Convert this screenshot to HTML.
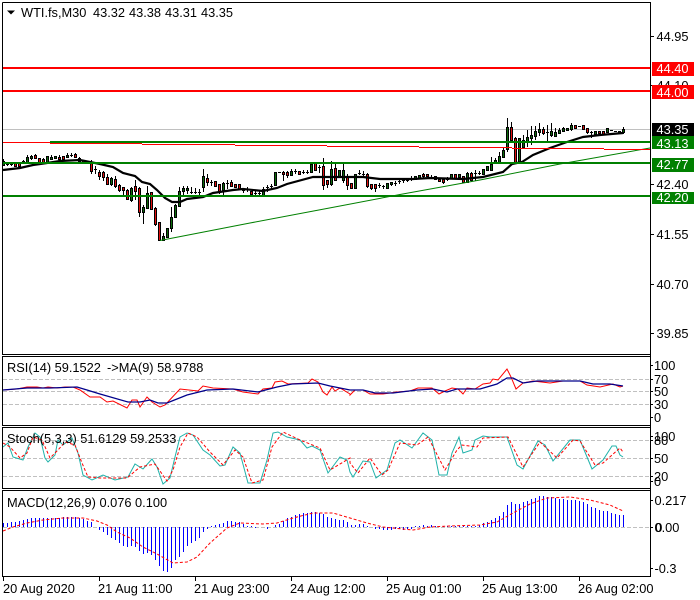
<!DOCTYPE html>
<html><head><meta charset="utf-8"><style>
html,body{margin:0;padding:0;background:#fff;width:700px;height:600px;overflow:hidden}
svg{display:block}
text{font-family:"Liberation Sans",sans-serif;font-size:12.8px;fill:#000}
.w{fill:#fff}
</style></head><body>
<svg width="700" height="600" viewBox="0 0 700 600" xmlns="http://www.w3.org/2000/svg">
<rect width="700" height="600" fill="#fff"/>
<g shape-rendering="crispEdges">
<path fill="none" stroke="#c0c0c0" d="M3 129.500H650"/>
<path fill="none" stroke="#000" d="M3.500 159V166M7.500 162V166M11.500 162V166M23.500 160V163M27.500 155V163M31.500 155V160M35.500 154V159M43.500 158V163M51.500 155V160M59.500 155V160M67.500 153V158M71.500 153V157M75.500 153V158M79.500 157V162M91.500 160V174M95.500 166V174M99.500 170V180M103.500 171V181M107.500 174V185M111.500 177V186M115.500 176V188M119.500 184V192M123.500 187V196M127.500 189V200M131.500 187V202M135.500 180V200M139.500 187V217M143.500 205V224M147.500 186V208M155.500 207V226M159.500 222V241M163.500 233V240M171.500 207V232M175.500 204V217M179.500 187V207M183.500 186V195M187.500 186V194M191.500 187V194M195.500 188V194M199.500 189V195M203.500 169V192M207.500 174V186M211.500 180V186M219.500 184V194M223.500 182V195M227.500 180V189M231.500 180V187M243.500 188V193M247.500 187V192M255.500 191V196M259.500 191V196M263.500 187V197M267.500 185V192M271.500 184V190M283.500 171V181M287.500 171V178M291.500 169V175M295.500 169V174M303.500 170V174M307.500 170V174M319.500 165V173M323.500 158V190M327.500 180V188M331.500 161V186M335.500 164V180M343.500 163V183M347.500 174V190M359.500 170V175M363.500 171V176M367.500 173V188M371.500 184V190M375.500 184V192M379.500 183V188M383.500 185V189M387.500 183V189M391.500 182V186M395.500 181V186M399.500 179V184M403.500 178V183M407.500 178V182M411.500 176V181M423.500 173V178M431.500 175V179M443.500 178V184M447.500 177V181M467.500 172V183M471.500 172V182M475.500 170V181M479.500 171V175M491.500 157V171M495.500 158V163M499.500 152V163M503.500 148V158M507.500 118V152M511.500 122V140M515.500 137V163M523.500 135V148M527.500 130V147M531.500 126V145M535.500 126V140M539.500 123V136M543.500 127V135M547.500 125V141M551.500 123V137M555.500 128V137M559.500 128V134M563.500 127V132M571.500 123V131M587.500 128V134M591.500 131V138M623.500 127V134"/>
<path fill="none" stroke="#000" d="M6 164.500h3M10 164.500h3M22 161.500h3M70 155.500h3M94 169.500h3M190 192.500h3M194 192.500h3M198 192.500h3M210 182.500h3M226 183.500h3M242 190.500h3M246 189.500h3M254 193.500h3M258 193.500h3M266 187.500h3M270 186.500h3M278 172.500h3M294 171.500h3M302 172.500h3M306 172.500h3M318 167.500h3M358 173.500h3M362 174.500h3M378 185.500h3M382 186.500h3M394 183.500h3M398 181.500h3M402 180.500h3M406 180.500h3M410 178.500h3M430 177.500h3M446 179.500h3M474 173.500h3M478 173.500h3M546 132.500h3M578 126.500h3M590 132.500h3M610 130.500h3M614 131.500h3"/>
<path fill="#0b6b0b" stroke="#000" d="M2.500 161.500h2v4h-2zM26.500 157.500h2v5h-2zM30.500 156.500h2v2h-2zM46.500 156.500h2v7h-2zM50.500 157.500h2v2h-2zM54.500 156.500h2v2h-2zM66.500 155.500h2v2h-2zM110.500 178.500h2v6h-2zM130.500 188.500h2v12h-2zM142.500 207.500h2v5h-2zM146.500 193.500h2v15h-2zM162.500 236.500h2v4h-2zM166.500 228.500h2v9h-2zM170.500 217.500h2v11h-2zM174.500 205.500h2v12h-2zM178.500 191.500h2v15h-2zM182.500 188.500h2v3h-2zM186.500 188.500h2v2h-2zM202.500 176.500h2v11h-2zM222.500 183.500h2v7h-2zM262.500 189.500h2v7h-2zM274.500 172.500h2v13h-2zM290.500 171.500h2v4h-2zM310.500 164.500h2v8h-2zM330.500 169.500h2v15h-2zM338.500 170.500h2v6h-2zM342.500 170.500h2v10h-2zM354.500 174.500h2v14h-2zM386.500 183.500h2v5h-2zM390.500 182.500h2v2h-2zM414.500 176.500h2v3h-2zM418.500 175.500h2v3h-2zM450.500 174.500h2v4h-2zM458.500 174.500h2v3h-2zM466.500 173.500h2v9h-2zM482.500 169.500h2v5h-2zM486.500 166.500h2v4h-2zM490.500 164.500h2v6h-2zM494.500 160.500h2v2h-2zM498.500 156.500h2v6h-2zM502.500 150.500h2v7h-2zM506.500 127.500h2v22h-2zM518.500 138.500h2v24h-2zM522.500 140.500h2v7h-2zM526.500 137.500h2v4h-2zM530.500 135.500h2v3h-2zM534.500 131.500h2v5h-2zM538.500 129.500h2v3h-2zM550.500 131.500h2v4h-2zM554.500 132.500h2v4h-2zM558.500 130.500h2v3h-2zM562.500 128.500h2v3h-2zM566.500 128.500h2v2h-2zM570.500 125.500h2v4h-2zM594.500 131.500h2v3h-2zM606.500 128.500h2v4h-2zM618.500 131.500h2v2h-2zM622.500 129.500h2v3h-2z"/>
<path fill="#e01010" stroke="#000" d="M14.500 163.500h2v3h-2zM18.500 163.500h2v3h-2zM34.500 155.500h2v3h-2zM38.500 158.500h2v4h-2zM42.500 159.500h2v3h-2zM58.500 157.500h2v2h-2zM62.500 156.500h2v3h-2zM74.500 154.500h2v3h-2zM78.500 158.500h2v3h-2zM82.500 160.500h2v2h-2zM86.500 161.500h2v2h-2zM90.500 163.500h2v8h-2zM98.500 172.500h2v4h-2zM102.500 172.500h2v5h-2zM106.500 177.500h2v7h-2zM114.500 179.500h2v7h-2zM118.500 185.500h2v5h-2zM122.500 187.500h2v3h-2zM126.500 190.500h2v9h-2zM134.500 186.500h2v5h-2zM138.500 188.500h2v24h-2zM150.500 192.500h2v17h-2zM154.500 208.500h2v16h-2zM158.500 222.500h2v18h-2zM206.500 178.500h2v4h-2zM214.500 181.500h2v5h-2zM218.500 184.500h2v7h-2zM230.500 182.500h2v4h-2zM234.500 184.500h2v3h-2zM238.500 184.500h2v5h-2zM250.500 191.500h2v3h-2zM282.500 172.500h2v2h-2zM286.500 172.500h2v3h-2zM298.500 171.500h2v3h-2zM314.500 163.500h2v7h-2zM322.500 166.500h2v19h-2zM326.500 180.500h2v4h-2zM334.500 168.500h2v12h-2zM346.500 177.500h2v8h-2zM350.500 183.500h2v5h-2zM366.500 174.500h2v12h-2zM370.500 184.500h2v4h-2zM374.500 184.500h2v4h-2zM422.500 174.500h2v2h-2zM426.500 174.500h2v2h-2zM434.500 176.500h2v3h-2zM438.500 179.500h2v2h-2zM442.500 179.500h2v3h-2zM454.500 174.500h2v4h-2zM462.500 176.500h2v6h-2zM470.500 173.500h2v7h-2zM510.500 127.500h2v13h-2zM514.500 138.500h2v24h-2zM542.500 129.500h2v4h-2zM574.500 125.500h2v3h-2zM582.500 125.500h2v4h-2zM586.500 128.500h2v4h-2zM598.500 131.500h2v2h-2zM602.500 131.500h2v3h-2z"/>
</g>
<polyline fill="none" stroke="#000" stroke-width="2.200" points="3,170 20,168 33,165 47,163 60,161 80,160 100,164 113,167 123,173 135,176 142,182 150,184 157,190 165,198 172,202 180,202 187,199 203,197 213,193 233,190 243,189 263,191 277,188 287,184 313,177 333,177 363,177 380,179 413,179 430,178 463,179 483,177 503,172 512,164 522,162 533,155 550,148 567,142 583,137 600,135 623,133"/>
<polyline fill="none" stroke="#008000" points="160,240.500 250,223 340,206 400,194.500 480,180 560,164 650,148"/>
<g shape-rendering="crispEdges">
<rect x="50" y="141" width="600" height="2" fill="#008000"/>
<rect x="3" y="162" width="647" height="2" fill="#008000"/>
<rect x="3" y="195" width="647" height="2" fill="#008000"/>
<rect x="3" y="142" width="47" height="1" fill="#ff0000"/>
<rect x="50" y="143" width="92" height="1" fill="#ff0000"/>
<rect x="142" y="144" width="93" height="1" fill="#ff0000"/>
<rect x="235" y="145" width="92" height="1" fill="#ff0000"/>
<rect x="327" y="146" width="92" height="1" fill="#ff0000"/>
<rect x="419" y="147" width="93" height="1" fill="#ff0000"/>
<rect x="512" y="148" width="92" height="1" fill="#ff0000"/>
<rect x="604" y="149" width="46" height="1" fill="#ff0000"/>
<rect x="3" y="67" width="647" height="2" fill="#ff0000"/>
<rect x="3" y="90" width="647" height="2" fill="#ff0000"/>
<path fill="none" stroke="#c0c0c0" stroke-dasharray="4 2" d="M3 379.500H650M3 391.500H650M3 404.500H650M3 440.500H650M3 458.500H650M3 476.500H650M3 527.500H650"/>
</g>
<path fill="none" stroke="#0000ff" shape-rendering="crispEdges" d="M3.500 527V523M7.500 527V523M11.500 527V522M15.500 527V522M19.500 527V521M23.500 527V520M27.500 527V519M31.500 527V518M35.500 527V518M39.500 527V518M43.500 527V518M47.500 527V518M51.500 527V518M55.500 527V518M59.500 527V518M63.500 527V517M67.500 527V517M71.500 527V517M75.500 527V517M79.500 527V518M83.500 527V519M87.500 527V521M91.500 527V522M99.500 527V530M103.500 527V532M107.500 527V535M111.500 527V538M115.500 527V540M119.500 527V543M123.500 527V546M127.500 527V547M131.500 527V546M135.500 527V547M139.500 527V551M143.500 527V554M147.500 527V553M151.500 527V555M155.500 527V560M159.500 527V566M163.500 527V571M167.500 527V572M171.500 527V568M175.500 527V560M179.500 527V557M183.500 527V552M187.500 527V546M191.500 527V543M195.500 527V541M199.500 527V538M203.500 527V532M207.500 527V529M211.500 527V526M215.500 527V525M219.500 527V524M223.500 527V523M227.500 527V521M231.500 527V521M235.500 527V522M239.500 527V522M243.500 527V524M247.500 527V526M251.500 527V526M255.500 527V528M267.500 527V529M275.500 527V525M279.500 527V524M283.500 527V521M287.500 527V518M291.500 527V517M295.500 527V515M299.500 527V514M303.500 527V513M307.500 527V513M311.500 527V512M315.500 527V512M319.500 527V513M323.500 527V514M327.500 527V517M331.500 527V518M335.500 527V519M339.500 527V520M343.500 527V520M347.500 527V522M351.500 527V525M355.500 527V525M359.500 527V524M363.500 527V524M367.500 527V526M375.500 527V529M379.500 527V529M383.500 527V530M387.500 527V530M391.500 527V530M395.500 527V529M399.500 527V529M403.500 527V530M407.500 527V529M411.500 527V529M415.500 527V526M419.500 527V526M423.500 527V525M427.500 527V526M431.500 527V525M435.500 527V526M439.500 527V526M443.500 527V526M447.500 527V526M451.500 527V526M455.500 527V526M459.500 527V526M463.500 527V526M467.500 527V526M471.500 527V526M475.500 527V526M479.500 527V525M483.500 527V523M487.500 527V522M491.500 527V520M495.500 527V518M499.500 527V516M503.500 527V512M507.500 527V505M511.500 527V502M515.500 527V504M519.500 527V504M523.500 527V502M527.500 527V501M531.500 527V499M535.500 527V498M539.500 527V496M543.500 527V496M547.500 527V497M551.500 527V497M555.500 527V498M559.500 527V499M563.500 527V499M567.500 527V500M571.500 527V500M575.500 527V500M579.500 527V501M583.500 527V502M587.500 527V504M591.500 527V507M595.500 527V508M599.500 527V510M603.500 527V511M607.500 527V511M611.500 527V513M615.500 527V514M619.500 527V515M623.500 527V515"/>
<polyline fill="none" stroke="#ff0000" points="3,390 17,389 27,387 37,387 43,388 48,387 57,388 65,387 73,387 80,390 90,397 100,397 107,402 113,401 127,408 132,400 137,400 140,407 147,397 152,402 160,407 165,405 180,389 198,391 203,386 213,388 233,389 243,392 258,394 263,389 272,388 275,382 282,381 288,384 308,383 312,379 318,382 323,392 327,395 332,387 335,391 340,388 350,394 350,395 355,390 363,390 370,394 383,394 397,392 410,391 418,388 432,388 439,394 445,391 452,388 458,389 463,394 467,388 475,389 483,384 490,383 493,379 498,380 507,369 511,377 516,389 523,383 533,381 550,383 563,381 580,381 587,385 600,387 613,384 620,387 623,386"/>
<polyline fill="none" stroke="#00008b" stroke-width="1.300" points="3,390 27,388 50,388 77,387 87,390 100,394 128,402 140,402 150,400 158,403 167,403 187,395 207,390 233,389 258,392 277,387 292,384 318,383 330,386 350,390 363,390 375,393 393,393 417,390 433,389 447,392 457,389 480,389 497,384 507,378 513,378 523,383 537,381 563,381 580,381 593,384 610,384 623,386"/>
<polyline fill="none" stroke="#20b2aa" points="3,447 8,443 13,457 23,460 28,447 35,433 40,437 45,458 48,462 55,455 58,440 63,445 72,438 78,453 83,475 92,480 103,475 115,480 128,477 135,464 143,469 152,459 157,467 163,484 170,478 175,457 180,437 187,433 193,435 203,450 210,455 220,466 225,465 233,447 240,453 248,483 260,483 267,460 273,433 278,432 287,437 300,440 307,448 312,446 320,450 328,473 340,457 347,460 350,472 353,477 363,461 370,462 376,478 387,470 395,443 400,440 412,448 423,433 432,440 439,475 447,475 452,453 459,437 463,453 472,450 475,440 483,436 490,437 507,437 517,465 523,469 538,441 545,445 553,461 570,440 580,440 592,469 603,460 612,446 616,446 620,455 623,457"/>
<polyline fill="none" stroke="#ff0000" stroke-dasharray="3 2" points="3,443 10,447 20,458 27,453 33,437 42,440 50,458 58,450 65,442 75,445 82,463 88,477 100,478 127,478 140,467 155,464 167,481 173,470 180,447 188,433 197,437 210,452 223,465 235,450 243,457 252,483 263,480 272,447 283,432 300,440 320,448 330,470 350,458 350,463 358,473 370,458 382,475 388,470 400,443 417,445 428,437 445,470 457,450 462,445 477,447 483,438 508,437 523,467 540,442 557,458 573,440 580,441 595,465 603,463 620,448 623,452"/>
<polyline fill="none" stroke="#ff0000" stroke-dasharray="3 2" points="3,531 13,527 27,523 43,520 63,518 83,518 97,521 107,525 117,532 130,538 143,547 157,554 173,563 187,562 197,557 210,543 227,528 240,523 263,524 277,523 293,518 313,513 333,513 350,518 367,523 383,527 413,530 430,527 450,526 480,525 497,522 513,513 530,504 547,498 570,497 590,500 610,505 623,511"/>
<g fill="none" stroke="#000" shape-rendering="crispEdges">
<path d="M2.500 2.500H650.500V576M2.500 2.500V354.500H650.500M2.500 356.500H650.500V425.500H2.500ZM2.500 427.500H650.500V488.500H2.500ZM2.500 490.500H650.500V576.500H2.500Z"/>
<path d="M650 36.500h4M650 85.500h4M650 184.500h4M650 234.500h4M650 284.500h4M650 333.500h4M650 365.500h3M650 379.500h3M650 391.500h3M650 404.500h3M650 417.500h3M650 436.500h3M650 440.500h3M650 458.500h3M650 476.500h3M650 481.500h3M650 500.500h3M650 527.500h3M650 568.500h3"/>
<path d="M3.500 577v4M99.500 577v4M195.500 577v4M291.500 577v4M387.500 577v4M483.500 577v4M579.500 577v4"/>
</g>
<path d="M7 10.500h8l-4 4z" fill="#000"/>
<text x="21" y="17">WTI.fs,M30</text><text x="93" y="17">43.32</text><text x="129" y="17">43.38</text><text x="165" y="17">43.31</text><text x="201" y="17">43.35</text>
<text x="7" y="372">RSI(14) 59.1522</text><text x="107" y="372">-&gt;MA(9) 58.9788</text>
<text x="7" y="443">Stoch(5,3,3) 51.6129 59.2533</text>
<text x="7" y="507">MACD(12,26,9) 0.076 0.100</text>
<text x="656.500" y="41">44.95</text><text x="656.500" y="90">44.10</text><text x="656.500" y="189">42.40</text><text x="656.500" y="239">41.55</text><text x="656.500" y="289">40.70</text><text x="656.500" y="338">39.85</text>
<g shape-rendering="crispEdges">
<rect x="652" y="62" width="42" height="14" fill="#ff0000"/><rect x="652" y="85" width="42" height="14" fill="#ff0000"/>
<rect x="652" y="123" width="42" height="13" fill="#000"/><rect x="652" y="136" width="42" height="13" fill="#008000"/>
<rect x="652" y="158" width="42" height="14" fill="#008000"/><rect x="652" y="192" width="42" height="12" fill="#008000"/>
</g>
<g class="w"><text class="w" x="656.500" y="73">44.40</text><text class="w" x="656.500" y="97">44.00</text><text class="w" x="656.500" y="134">43.35</text><text class="w" x="656.500" y="148">43.13</text><text class="w" x="656.500" y="169">42.77</text><text class="w" x="656.500" y="202">42.20</text></g>
<text x="654" y="370">100</text><text x="654" y="384">70</text><text x="654" y="396">50</text><text x="654" y="409">30</text><text x="654" y="422">0</text>
<text x="654" y="441">100</text><text x="654" y="445">80</text><text x="654" y="463">50</text><text x="654" y="481">20</text><text x="654" y="486">0</text>
<text x="654.500" y="505">0.217</text><text x="654.500" y="532">0.00</text><text x="655.300" y="532">0</text><text x="654.500" y="573">-0.3</text>
<text x="3" y="593">20 Aug 2020</text><text x="98" y="593">21 Aug 11:00</text><text x="194" y="593">21 Aug 23:00</text><text x="290" y="593">24 Aug 12:00</text><text x="386" y="593">25 Aug 01:00</text><text x="482" y="593">25 Aug 13:00</text><text x="578" y="593">26 Aug 02:00</text>
</svg>
</body></html>
